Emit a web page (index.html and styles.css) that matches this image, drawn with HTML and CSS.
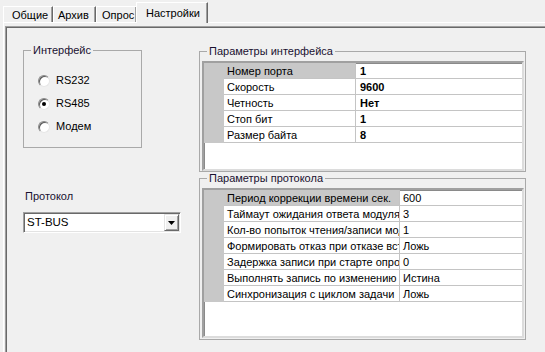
FILE: index.html
```html
<!DOCTYPE html>
<html lang="ru">
<head>
<meta charset="utf-8">
<title>Настройки</title>
<link rel="stylesheet" href="styles.css">
</head>
<body>
<div class="tabs">
  <div class="tab t1">Общие</div>
  <div class="tab t2">Архив</div>
  <div class="tab t3">Опрос</div>
  <div class="tab active">Настройки</div>
</div>
<div class="page">
  <div class="panel">
    <div class="left">
      <fieldset class="group iface">
        <legend>Интерфейс</legend>
        <div class="radios">
          <div class="radio"><span class="dot"></span>RS232</div>
          <div class="radio"><span class="dot on"></span>RS485</div>
          <div class="radio"><span class="dot"></span>Модем</div>
        </div>
      </fieldset>
      <div class="proto-label">Протокол</div>
      <div class="combo">
        <span class="combo-text">ST-BUS</span>
        <span class="combo-btn"><svg width="7" height="4" viewBox="0 0 7 4"><polygon points="0,0 7,0 3.5,4" fill="#000"/></svg></span>
      </div>
    </div>
    <div class="right">
      <fieldset class="group g1">
        <legend>Параметры интерфейса</legend>
        <div class="grid grid1">
          <div class="row sel"><span class="fix"></span><span class="name">Номер порта</span><span class="val">1</span></div>
          <div class="row"><span class="fix"></span><span class="name">Скорость</span><span class="val">9600</span></div>
          <div class="row"><span class="fix"></span><span class="name">Четность</span><span class="val">Нет</span></div>
          <div class="row"><span class="fix"></span><span class="name">Стоп бит</span><span class="val">1</span></div>
          <div class="row"><span class="fix"></span><span class="name">Размер байта</span><span class="val">8</span></div>
        </div>
      </fieldset>
      <fieldset class="group g2">
        <legend>Параметры протокола</legend>
        <div class="grid grid2">
          <div class="row sel"><span class="fix"></span><span class="name">Период коррекции времени сек.</span><span class="val">600</span></div>
          <div class="row"><span class="fix"></span><span class="name">Таймаут ожидания ответа модуля</span><span class="val">3</span></div>
          <div class="row"><span class="fix"></span><span class="name">Кол-во попыток чтения/записи модуля</span><span class="val">1</span></div>
          <div class="row"><span class="fix"></span><span class="name">Формировать отказ при отказе встроенного</span><span class="val">Ложь</span></div>
          <div class="row"><span class="fix"></span><span class="name">Задержка записи при старте опроса</span><span class="val">0</span></div>
          <div class="row"><span class="fix"></span><span class="name">Выполнять запись по изменению</span><span class="val">Истина</span></div>
          <div class="row"><span class="fix"></span><span class="name">Синхронизация с циклом задачи</span><span class="val">Ложь</span></div>
        </div>
      </fieldset>
    </div>
  </div>
</div>
</body>
</html>
```
FILE: styles.css
```css
* { box-sizing: border-box; }
html, body { margin: 0; }
body {
  width: 545px;
  height: 352px;
  overflow: hidden;
  background: #f0f0f0;
  font: 11px/13px "Liberation Sans", Arial, sans-serif;
  color: #000;
}

/* tabs */
.tabs {
  display: flex;
  align-items: flex-end;
  height: 22px;
  padding-left: 3px;
}
.tab {
  height: 16px;
  border-top: 1px solid #fff;
  border-left: 1px solid #fff;
  border-right: 1px solid #696969;
  box-shadow: inset -1px 0 0 #a0a0a0;
  background: #f0f0f0;
  line-height: 14px;
  padding-top: 1px;
  white-space: nowrap;
}
.t1 { width: 50px; padding-left: 8px; }
.t2 { width: 43px; padding-left: 4px; }
.t3 { width: 41px; padding-left: 5px; }
.tab.active {
  position: relative;
  z-index: 1;
  width: 72px;
  height: 21px;
  margin-left: -1px;
  margin-bottom: -1px;
  padding-left: 9px;
  padding-top: 3px;
}

/* page */
.page {
  margin-left: 3px;
  border-top: 1px solid #fff;
  border-left: 1px solid #fff;
  height: 340px;
  padding: 3px 0 0 1px;
}
.panel {
  display: flex;
  width: 600px;
  height: 340px;
  border-top: 1px solid #a0a0a0;
  border-left: 1px solid #a0a0a0;
  box-shadow: inset 1px 1px 0 #696969;
}

/* group boxes */
fieldset.group {
  margin: 0;
  padding: 0;
  min-width: 0;
  border: 1px solid #a9a9a9;
}
fieldset.group legend {
  margin-left: 7px;
  padding: 0 2px;
  line-height: 13px;
  color: #1a1030;
}

.left {
  width: 193px;
  padding: 17px 0 0 17px;
}
.iface {
  width: 119px;
  height: 104px;
}
.radios {
  padding: 12px 0 0 14px;
}
.radio {
  display: flex;
  align-items: center;
  gap: 6px;
  height: 23px;
}
.dot {
  width: 12px;
  height: 12px;
  border-radius: 50%;
  background: #fff;
  border: 1px solid;
  border-color: #8a8a8a #e6e6e6 #e6e6e6 #8a8a8a;
  box-shadow: inset 1px 1px 0 #5a5a5a;
  display: flex;
  align-items: center;
  justify-content: center;
}
.dot.on::after {
  content: "";
  width: 4px;
  height: 4px;
  border-radius: 50%;
  background: #000;
}

.proto-label {
  margin-top: 42px;
  padding-left: 2px;
  color: #1a1030;
}
.combo {
  margin-top: 9px;
  width: 158px;
  height: 21px;
  background: #fff;
  border: 1px solid;
  border-color: #a0a0a0 #fff #fff #a0a0a0;
  box-shadow: inset 1px 1px 0 #696969, inset -1px -1px 0 #e3e3e3;
  padding: 1px;
  display: flex;
  align-items: center;
  justify-content: space-between;
}
.combo-text {
  padding-left: 2px;
  font-size: 11.5px;
}
.combo-btn {
  width: 15px;
  height: 17px;
  background: #f0f0f0;
  border: 1px solid;
  border-color: #e3e3e3 #696969 #696969 #e3e3e3;
  box-shadow: inset 1px 1px 0 #fff, inset -1px -1px 0 #a0a0a0;
  display: flex;
  align-items: center;
  justify-content: center;
}

/* right side */
.right {
  width: 327px;
  padding-top: 18px;
}
.g1 { height: 127px; }
.g2 { height: 168px; }
.grid {
  margin: 3px 0 0 2px;
  width: 322px;
  background: #fff;
  border: 2px solid;
  border-color: #a0a0a0 #dcdcdc #dcdcdc #a0a0a0;
  box-shadow: inset 1px 1px 0 #8a8a8a;
  overflow: hidden;
}
.grid1 { height: 110px; }
.grid2 { height: 150px; }
.row {
  display: grid;
  height: 16px;
}
.grid1 .row { grid-template-columns: 20px 132px 1fr; }
.grid2 .row { grid-template-columns: 20px 176px 1fr; }
.row span {
  white-space: nowrap;
  overflow: hidden;
  line-height: 15px;
  padding-top: 1px;
}
.fix { background: #c8c8c8; }
.name {
  padding-left: 3px;
  border-right: 1px solid #c4c4c4;
  border-bottom: 1px solid #c4c4c4;
}
.val {
  padding-left: 4px;
  border-bottom: 1px solid #c4c4c4;
}
.grid1 .val { font-weight: bold; }
.grid2 .val { padding-left: 3px; }
.row.sel .name { background: #c8c8c8; }
```
